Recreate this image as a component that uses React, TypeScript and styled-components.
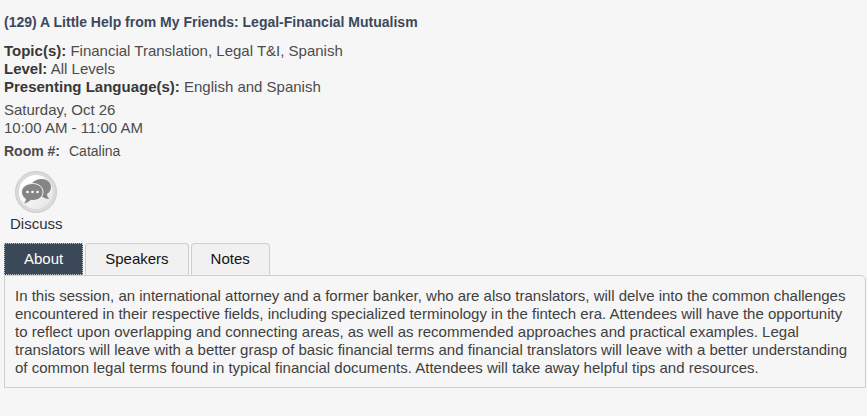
import React, { useState } from "react";
import styled, { createGlobalStyle } from "styled-components";

const GlobalStyle = createGlobalStyle`
  * { box-sizing: border-box; }
  body {
    margin: 0;
    background: #f6f6f6;
    color: #4c4c4c;
    font: 15px/18px "Liberation Sans", Arial, sans-serif;
  }
`;

const Page = styled.main`
  display: flex;
  flex-direction: column;
  padding: 13px 1px 28px 4px;
`;

const Title = styled.h1`
  margin: 0 0 11px;
  color: #3c485a;
  font-size: 14px;
  line-height: 18px;
`;

const Details = styled.div`
  margin-bottom: 5px;
`;

const Label = styled.strong`
  color: #383838;
`;

const Schedule = styled.div`
  margin-bottom: 5px;
`;

const Room = styled.div`
  display: flex;
  gap: 9px;
  font-size: 14px;
  margin-bottom: 10px;
`;

const DiscussButton = styled.button`
  display: flex;
  flex-direction: column;
  align-items: center;
  align-self: flex-start;
  gap: 1px;
  margin: 0 0 10px;
  padding: 0 6px;
  border: 0;
  background: none;
  color: #303038;
  font: inherit;
  cursor: pointer;
`;

const TabList = styled.div`
  display: flex;
  gap: 2px;
`;

const Tab = styled.button<{ $active: boolean }>`
  height: 32px;
  padding: 0 19px;
  border: 1px ${(p) => (p.$active ? "dotted #c4cad0" : "solid #cfcfcf")};
  border-bottom-color: ${(p) => (p.$active ? "#c4cad0" : "transparent")};
  border-radius: ${(p) => (p.$active ? "0" : "4px 4px 0 0")};
  background: ${(p) => (p.$active ? "#3b4858" : "#f1f1f1")};
  color: ${(p) => (p.$active ? "#ffffff" : "#111111")};
  font: inherit;
  cursor: pointer;
`;

const Panel = styled.section`
  padding: 11px 10px 10px;
  border: 1px solid #cfcfcf;
  border-radius: 0 5px 0 0;
  color: #404040;
`;

const Paragraph = styled.p`
  margin: 0;
`;

function DiscussIcon() {
  return (
    <svg width="44" height="44" viewBox="0 0 44 44" aria-hidden="true">
      <defs>
        <linearGradient id="disc" x1="0" y1="0" x2="1" y2="1">
          <stop offset="0.3" stopColor="#ffffff" />
          <stop offset="1" stopColor="#dedede" />
        </linearGradient>
      </defs>
      <circle cx="22" cy="22" r="19" fill="url(#disc)" stroke="#dadada" strokeWidth="4" />
      <circle cx="22" cy="22" r="20.500" fill="none" stroke="#d0d0d0" strokeWidth="1" />
      <path
        d="M18 13C20.500 10.200 24 9 27.500 9C33 9 37 12.500 37 17C37 20 35.500 22.500 33 24C33 26 34 27.500 35.500 29C32 29 29.500 28 27.500 26L24 19Z"
        fill="#858585"
      />
      <path
        d="M18.500 13.500C24.700 13.500 29 17 29 22C29 27 24.700 30.500 18.500 30.500L16.500 30.400C14.500 32.500 12 34 9 34C10.500 32.500 11.500 31 11.500 29C9 27.500 7.500 25 7.500 22C7.500 17 12.500 13.500 18.500 13.500Z"
        fill="#858585"
        stroke="#f6f6f6"
        strokeWidth="1"
      />
      <circle cx="13.500" cy="22" r="1.300" fill="#ffffff" />
      <circle cx="18.500" cy="22" r="1.300" fill="#ffffff" />
      <circle cx="23.500" cy="22" r="1.300" fill="#ffffff" />
    </svg>
  );
}

const tabs = ["About", "Speakers", "Notes"];

export default function App() {
  const [active, setActive] = useState("About");

  return (
    <>
      <GlobalStyle />
      <Page>
        <Title>(129) A Little Help from My Friends: Legal-Financial Mutualism</Title>
        <Details>
          <div><Label>Topic(s):</Label> Financial Translation, Legal T&amp;I, Spanish</div>
          <div><Label>Level:</Label> All Levels</div>
          <div><Label>Presenting Language(s):</Label> English and Spanish</div>
        </Details>
        <Schedule>
          <div>Saturday, Oct 26</div>
          <div>10:00 AM - 11:00 AM</div>
        </Schedule>
        <Room>
          <strong>Room #:</strong>
          <span>Catalina</span>
        </Room>
        <DiscussButton type="button">
          <DiscussIcon />
          Discuss
        </DiscussButton>
        <TabList role="tablist">
          {tabs.map((name) => (
            <Tab
              key={name}
              id={`tab-${name}`}
              type="button"
              role="tab"
              aria-selected={active === name}
              aria-controls="session-panel"
              $active={active === name}
              onClick={() => setActive(name)}
            >
              {name}
            </Tab>
          ))}
        </TabList>
        <Panel id="session-panel" role="tabpanel" aria-labelledby={`tab-${active}`}>
          {active === "About" && (
            <Paragraph>
              In this session, an international attorney and a former banker, who are also
              translators, will delve into the common challenges encountered in their respective
              fields, including specialized terminology in the fintech era. Attendees will have
              the opportunity to reflect upon overlapping and connecting areas, as well as
              recommended approaches and practical examples. Legal translators will leave with a
              better grasp of basic financial terms and financial translators will leave with a
              better understanding of common legal terms found in typical financial documents.
              Attendees will take away helpful tips and resources.
            </Paragraph>
          )}
        </Panel>
      </Page>
    </>
  );
}
